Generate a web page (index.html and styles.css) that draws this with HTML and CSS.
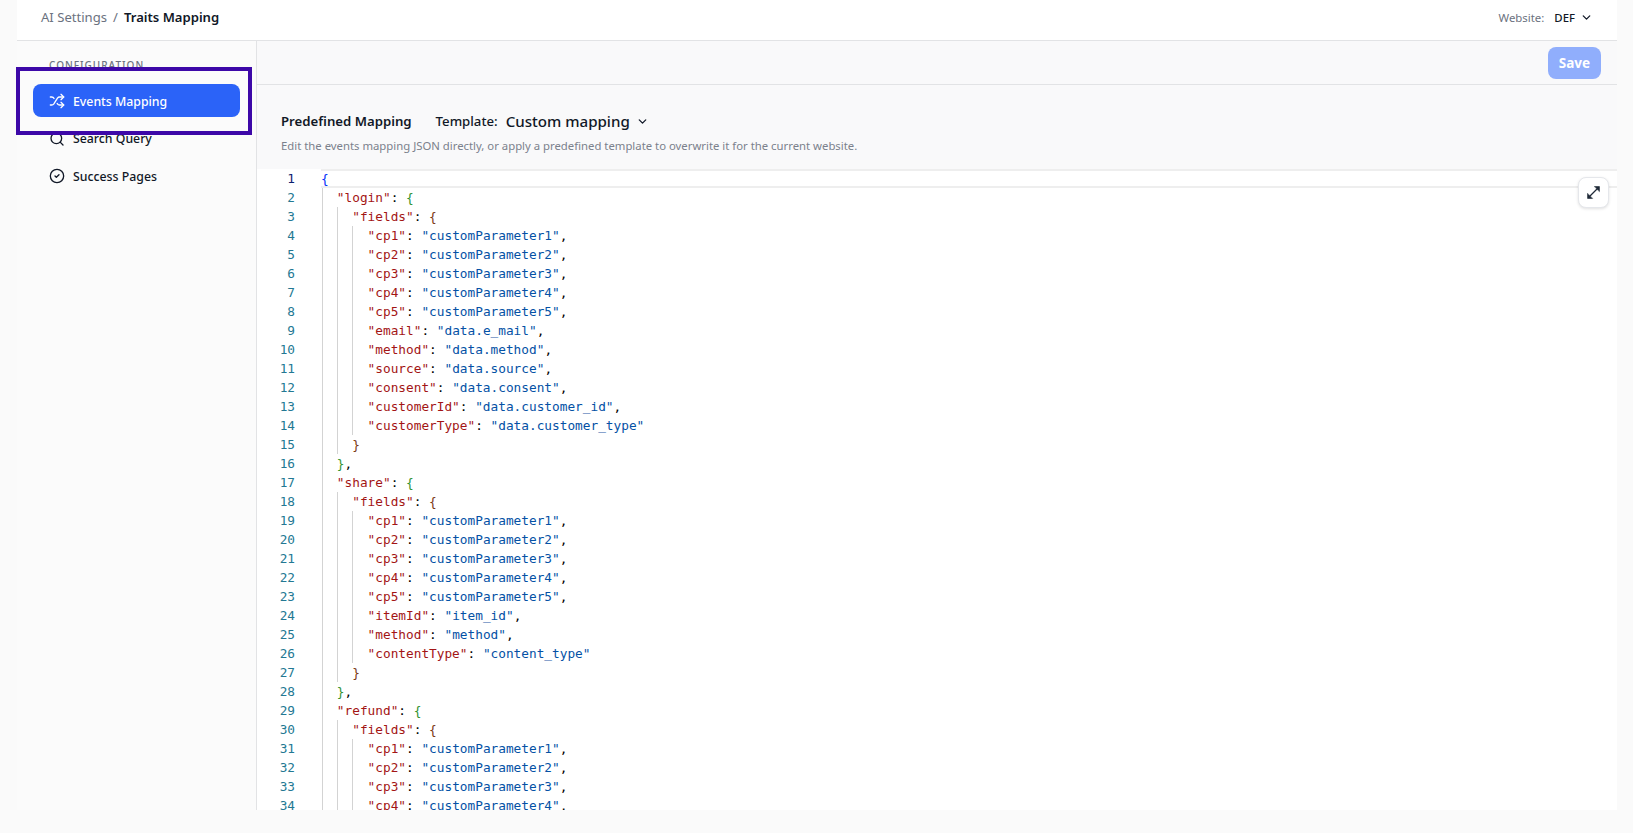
FILE: index.html
```html
<!DOCTYPE html>
<html lang="en">
<head>
<meta charset="utf-8">
<title>Traits Mapping</title>
<link rel="stylesheet" href="styles.css">
</head>
<body>
<div class="shell">
  <header class="topbar">
    <nav class="crumbs"><span class="crumb">AI Settings</span><span class="sep">/</span><span class="crumb-current">Traits Mapping</span></nav>
    <div class="site"><span class="site-label">Website:</span><span class="site-value">DEF</span>
      <svg class="chev" viewBox="0 0 24 24"><path d="m6 9 6 6 6-6"/></svg></div>
  </header>
  <div class="body-row">
    <aside class="sidebar">
      <div class="side-title">CONFIGURATION</div>
      <a class="nav-item active"><svg class="nav-icon" viewBox="0 0 24 24"><path d="m18 14 4 4-4 4"/><path d="m18 2 4 4-4 4"/><path d="M2 18h1.973a4 4 0 0 0 3.3-1.7l5.454-8.6a4 4 0 0 1 3.3-1.7H22"/><path d="M2 6h1.972a4 4 0 0 1 3.6 2.2"/><path d="M22 18h-6.041a4 4 0 0 1-3.3-1.8l-.359-.45"/></svg>Events Mapping</a>
      <a class="nav-item"><svg class="nav-icon" viewBox="0 0 24 24"><circle cx="11" cy="11" r="8"/><path d="m21 21-4.3-4.3"/></svg>Search Query</a>
      <a class="nav-item"><svg class="nav-icon" viewBox="0 0 24 24"><circle cx="12" cy="12" r="10"/><path d="m9 12 2 2 4-4"/></svg>Success Pages</a>
    </aside>
    <main class="main">
      <div class="toolbar"><button class="save">Save</button></div>
      <section class="intro">
        <div class="intro-row">
          <h2 class="intro-title">Predefined Mapping</h2>
          <div class="template"><span class="template-label">Template:</span><span class="template-value">Custom mapping</span>
            <svg class="chev" viewBox="0 0 24 24"><path d="m6 9 6 6 6-6"/></svg></div>
        </div>
        <p class="intro-desc">Edit the events mapping JSON directly, or apply a predefined template to overwrite it for the current website.</p>
      </section>
      <div class="editor">
        <div class="line current"><span class="ln">1</span><span class="code"><span class="b1">{</span></span></div>
        <div class="line"><span class="ln">2</span><span class="code"><i class="ind"></i><span class="k">"login"</span>: <span class="b2">{</span></span></div>
        <div class="line"><span class="ln">3</span><span class="code"><i class="ind"></i><i class="ind"></i><span class="k">"fields"</span>: <span class="b3">{</span></span></div>
        <div class="line"><span class="ln">4</span><span class="code"><i class="ind"></i><i class="ind"></i><i class="ind"></i><span class="k">"cp1"</span>: <span class="s">"customParameter1"</span>,</span></div>
        <div class="line"><span class="ln">5</span><span class="code"><i class="ind"></i><i class="ind"></i><i class="ind"></i><span class="k">"cp2"</span>: <span class="s">"customParameter2"</span>,</span></div>
        <div class="line"><span class="ln">6</span><span class="code"><i class="ind"></i><i class="ind"></i><i class="ind"></i><span class="k">"cp3"</span>: <span class="s">"customParameter3"</span>,</span></div>
        <div class="line"><span class="ln">7</span><span class="code"><i class="ind"></i><i class="ind"></i><i class="ind"></i><span class="k">"cp4"</span>: <span class="s">"customParameter4"</span>,</span></div>
        <div class="line"><span class="ln">8</span><span class="code"><i class="ind"></i><i class="ind"></i><i class="ind"></i><span class="k">"cp5"</span>: <span class="s">"customParameter5"</span>,</span></div>
        <div class="line"><span class="ln">9</span><span class="code"><i class="ind"></i><i class="ind"></i><i class="ind"></i><span class="k">"email"</span>: <span class="s">"data.e_mail"</span>,</span></div>
        <div class="line"><span class="ln">10</span><span class="code"><i class="ind"></i><i class="ind"></i><i class="ind"></i><span class="k">"method"</span>: <span class="s">"data.method"</span>,</span></div>
        <div class="line"><span class="ln">11</span><span class="code"><i class="ind"></i><i class="ind"></i><i class="ind"></i><span class="k">"source"</span>: <span class="s">"data.source"</span>,</span></div>
        <div class="line"><span class="ln">12</span><span class="code"><i class="ind"></i><i class="ind"></i><i class="ind"></i><span class="k">"consent"</span>: <span class="s">"data.consent"</span>,</span></div>
        <div class="line"><span class="ln">13</span><span class="code"><i class="ind"></i><i class="ind"></i><i class="ind"></i><span class="k">"customerId"</span>: <span class="s">"data.customer_id"</span>,</span></div>
        <div class="line"><span class="ln">14</span><span class="code"><i class="ind"></i><i class="ind"></i><i class="ind"></i><span class="k">"customerType"</span>: <span class="s">"data.customer_type"</span></span></div>
        <div class="line"><span class="ln">15</span><span class="code"><i class="ind"></i><i class="ind"></i><span class="b3">}</span></span></div>
        <div class="line"><span class="ln">16</span><span class="code"><i class="ind"></i><span class="b2">}</span>,</span></div>
        <div class="line"><span class="ln">17</span><span class="code"><i class="ind"></i><span class="k">"share"</span>: <span class="b2">{</span></span></div>
        <div class="line"><span class="ln">18</span><span class="code"><i class="ind"></i><i class="ind"></i><span class="k">"fields"</span>: <span class="b3">{</span></span></div>
        <div class="line"><span class="ln">19</span><span class="code"><i class="ind"></i><i class="ind"></i><i class="ind"></i><span class="k">"cp1"</span>: <span class="s">"customParameter1"</span>,</span></div>
        <div class="line"><span class="ln">20</span><span class="code"><i class="ind"></i><i class="ind"></i><i class="ind"></i><span class="k">"cp2"</span>: <span class="s">"customParameter2"</span>,</span></div>
        <div class="line"><span class="ln">21</span><span class="code"><i class="ind"></i><i class="ind"></i><i class="ind"></i><span class="k">"cp3"</span>: <span class="s">"customParameter3"</span>,</span></div>
        <div class="line"><span class="ln">22</span><span class="code"><i class="ind"></i><i class="ind"></i><i class="ind"></i><span class="k">"cp4"</span>: <span class="s">"customParameter4"</span>,</span></div>
        <div class="line"><span class="ln">23</span><span class="code"><i class="ind"></i><i class="ind"></i><i class="ind"></i><span class="k">"cp5"</span>: <span class="s">"customParameter5"</span>,</span></div>
        <div class="line"><span class="ln">24</span><span class="code"><i class="ind"></i><i class="ind"></i><i class="ind"></i><span class="k">"itemId"</span>: <span class="s">"item_id"</span>,</span></div>
        <div class="line"><span class="ln">25</span><span class="code"><i class="ind"></i><i class="ind"></i><i class="ind"></i><span class="k">"method"</span>: <span class="s">"method"</span>,</span></div>
        <div class="line"><span class="ln">26</span><span class="code"><i class="ind"></i><i class="ind"></i><i class="ind"></i><span class="k">"contentType"</span>: <span class="s">"content_type"</span></span></div>
        <div class="line"><span class="ln">27</span><span class="code"><i class="ind"></i><i class="ind"></i><span class="b3">}</span></span></div>
        <div class="line"><span class="ln">28</span><span class="code"><i class="ind"></i><span class="b2">}</span>,</span></div>
        <div class="line"><span class="ln">29</span><span class="code"><i class="ind"></i><span class="k">"refund"</span>: <span class="b2">{</span></span></div>
        <div class="line"><span class="ln">30</span><span class="code"><i class="ind"></i><i class="ind"></i><span class="k">"fields"</span>: <span class="b3">{</span></span></div>
        <div class="line"><span class="ln">31</span><span class="code"><i class="ind"></i><i class="ind"></i><i class="ind"></i><span class="k">"cp1"</span>: <span class="s">"customParameter1"</span>,</span></div>
        <div class="line"><span class="ln">32</span><span class="code"><i class="ind"></i><i class="ind"></i><i class="ind"></i><span class="k">"cp2"</span>: <span class="s">"customParameter2"</span>,</span></div>
        <div class="line"><span class="ln">33</span><span class="code"><i class="ind"></i><i class="ind"></i><i class="ind"></i><span class="k">"cp3"</span>: <span class="s">"customParameter3"</span>,</span></div>
        <div class="line"><span class="ln">34</span><span class="code"><i class="ind"></i><i class="ind"></i><i class="ind"></i><span class="k">"cp4"</span>: <span class="s">"customParameter4"</span>,</span></div>
        <button class="expand" aria-label="Expand"><svg viewBox="0 0 24 24"><path class="head" d="M14 2.5h7.5V10z"/><path class="head" d="M10 21.5H2.5V14z"/><path d="m18 6-12 12"/></svg></button>
      </div>
    </main>
  </div>
  <div class="highlight"></div>
</div>
</body>
</html>
```
FILE: styles.css
```css
* { box-sizing: border-box; }
html, body { margin: 0; height: 100%; overflow: hidden; }
body { background: #fafafa; font-family: "Noto Sans", sans-serif; color: #111827; }
svg { fill: none; stroke: currentColor; stroke-width: 2; stroke-linecap: round; stroke-linejoin: round; flex: none; }

.shell { position: relative; margin: 0 16px 0 17px; height: 810px; display: flex; flex-direction: column; }

.topbar { height: 41px; flex: none; background: #fff; border-bottom: 1px solid #e2e3e5; display: flex; align-items: center; justify-content: space-between; padding: 0 24px 6px 24px; }
.crumbs { display: flex; align-items: center; gap: 6px; font-size: 13.1px; }
.crumb { color: #6b7280; }
.sep { color: #6b7280; }
.crumb-current { color: #111827; font-weight: 600; }
.site { display: flex; align-items: center; font-size: 11.4px; }
.site-label { color: #6b7280; margin-right: 10px; }
.site-value { font-weight: 500; color: #111827; margin-right: 5px; }
.chev { width: 13px; height: 13px; stroke-width: 2.4; }

.body-row { flex: 1; min-height: 0; display: flex; }
.sidebar { width: 240px; flex: none; background: #fbfbfb; border-right: 1px solid #e2e3e5; padding: 17px 16px 0 16px; display: flex; flex-direction: column; gap: 4.5px; }
.side-title { font-size: 10px; letter-spacing: 1px; color: #6b7280; line-height: 14px; margin: 0 0 7.5px 16px; font-weight: 500; }
.nav-item { height: 33px; padding: 1px 16px 0; display: flex; align-items: center; gap: 8px; border-radius: 8px; font-size: 12.3px; font-weight: 500; color: #111827; }
.nav-item.active { background: #2b63f8; color: #fff; }
.nav-icon { width: 16px; height: 16px; }

.main { flex: 1; min-width: 0; display: flex; flex-direction: column; background: #f9f9fa; }
.toolbar { height: 44px; flex: none; border-bottom: 1px solid #e2e3e5; display: flex; justify-content: flex-end; align-items: flex-start; padding: 6px 16px 0 0; }
.save { width: 53px; height: 32px; border: 0; border-radius: 8px; background: #90aefc; color: #fff; font: 700 13.5px "Noto Sans", sans-serif; }

.intro { height: 84px; flex: none; padding: 24px 24px 0 24px; }
.intro-row { display: flex; align-items: center; gap: 24px; height: 24px; }
.intro-title { margin: 0; font-size: 13.2px; font-weight: 600; color: #111827; }
.template { display: flex; align-items: center; color: #111827; }
.template-label { font-size: 13.2px; font-weight: 500; margin-right: 8px; }
.template-value { font-size: 15.1px; font-weight: 500; margin-right: 6px; }
.intro-desc { margin: 5px 0 0; font-size: 11.33px; line-height: 16px; color: #7b818c; }

.editor { position: relative; flex: 1; min-height: 0; overflow: hidden; background: #fff; }
.line { position: relative; height: 19px; display: flex; font: 12.78px/19px "DejaVu Sans Mono", monospace; white-space: pre; color: #000; }
.ln { width: 38px; margin-right: 26.5px; flex: none; text-align: right; color: #237893; }
.code { display: flex; flex: 1; }
.current .ln { color: #0b216f; }
.current .code { margin-left: -0.5px; box-shadow: inset 0 2px 0 #eeeeee, inset 0 -2px 0 #eeeeee; }
.ind { display: block; width: 2ch; border-left: 1px solid #d3d3d3; flex: none; }
.k { color: #a31515; }
.s { color: #0451a5; }
.b1 { color: #0431fa; }
.b2 { color: #319331; }
.b3 { color: #7b3814; }

.expand { position: absolute; top: 8px; right: 8px; width: 31px; height: 31px; padding: 0; border: 1px solid #e5e7eb; border-radius: 8px; background: #fff; color: #1f2937; box-shadow: 0 1px 3px rgba(0,0,0,.12); display: flex; align-items: center; justify-content: center; }
.expand svg { width: 15px; height: 15px; }
.expand .head { fill: currentColor; stroke-width: 1; }

.highlight { position: absolute; left: -1px; top: 67px; width: 236px; height: 68px; border: 4px solid #3d08a8; pointer-events: none; }
```
